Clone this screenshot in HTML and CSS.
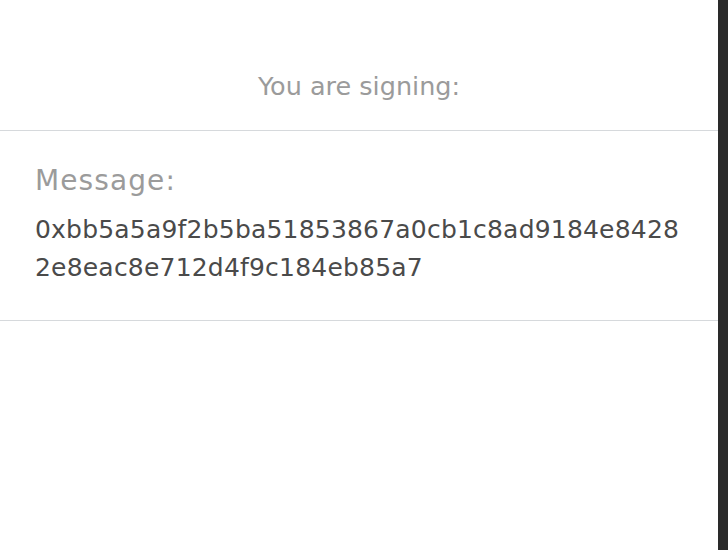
FILE: index.html
```html
<!DOCTYPE html>
<html>
<head>
<meta charset="utf-8">
<link rel="stylesheet" href="styles.css">
</head>
<body>
<div class="app">
  <main class="panel">
    <div class="header">You are signing:</div>
    <section class="message">
      <div class="label">Message:</div>
      <div class="value">
        <span class="line">0xbb5a5a9f2b5ba51853867a0cb1c8ad9184e8428</span>
        <span class="line">2e8eac8e712d4f9c184eb85a7</span>
      </div>
    </section>
  </main>
  <div class="scrollbar"></div>
</div>
</body>
</html>
```
FILE: styles.css
```css
html, body {
  margin: 0;
  padding: 0;
  height: 100%;
  background: #ffffff;
}
.app {
  display: flex;
  height: 550px;
  width: 728px;
  font-family: "DejaVu Sans", "Open Sans", sans-serif;
}
.panel {
  flex: 1;
  display: flex;
  flex-direction: column;
  background: #fff;
}
.header {
  height: 131px;
  box-sizing: border-box;
  padding-top: 68px;
  text-align: center;
  font-size: 25.5px;
  line-height: 36px;
  color: #9b9b9b;
  border-bottom: 1px solid #d6d9dc;
}
.message {
  height: 190px;
  box-sizing: border-box;
  padding: 32px 35px 0;
  border-bottom: 1px solid #d6d9dc;
}
.label {
  font-size: 28px;
  line-height: 36px;
  letter-spacing: 1.1px;
  color: #9b9b9b;
}
.value {
  margin-top: 12px;
  font-size: 25px;
  line-height: 38px;
  letter-spacing: 0.2px;
  color: #4a4a4a;
}
.line {
  display: block;
  white-space: nowrap;
}
.scrollbar {
  width: 10px;
  background: #2a2a2a;
}
```
